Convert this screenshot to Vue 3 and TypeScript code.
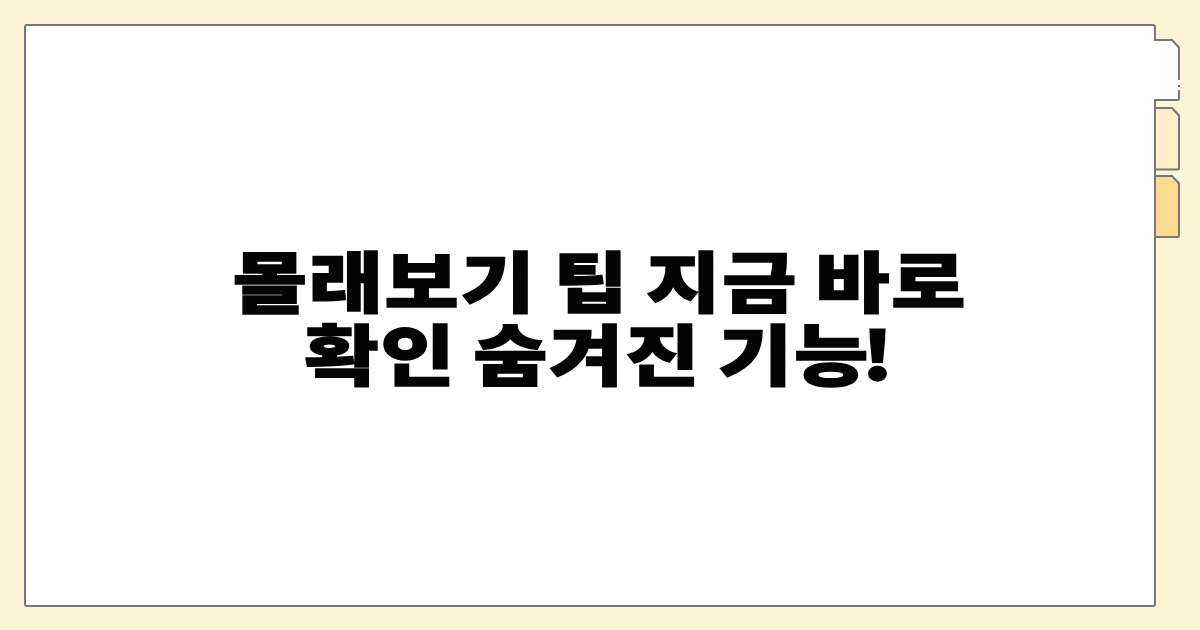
<script setup lang="ts">
interface Tab { h: number; bottom: number; fill: string; cls: string; x0: number }
const tabs: Tab[] = [
  { h: 64, bottom: 61, fill: '#ffffff', cls: 'first', x0: 0 },
  { h: 64, bottom: 62.5, fill: '#fdeec8', cls: 'second', x0: 2 },
  { h: 63, bottom: 62, fill: '#fed990', cls: 'third', x0: 2 },
]
function tabPath(t: Tab): string {
  return `M${t.x0} 1 H18 L25 8.5 V${t.bottom - 1.5} Q25 ${t.bottom} 23.5 ${t.bottom} H${t.x0}`
}
</script>

<template>
  <main class="page">
    <section class="card">
      <h1 class="title">
        <span>몰래보기 팁 지금 바로</span>
        <span>확인 숨겨진 기<span class="tight">능</span>!</span>
      </h1>
    </section>
    <aside class="tabs">
      <svg
        v-for="t in tabs"
        :key="t.cls"
        :class="['tab', t.cls]"
        width="27"
        :height="t.h"
        :viewBox="`0 0 27 ${t.h}`"
      >
        <path :d="tabPath(t)" :fill="t.fill" stroke="#777" stroke-width="2" />
        <path
          v-if="t.cls === 'first'"
          d="M25 41 V46 M25 48 V51"
          fill="none"
          stroke="#fff"
          stroke-width="2.4"
        />
      </svg>
    </aside>
  </main>
</template>

<style>
html, body { margin: 0; background: #fef5d9; }
</style>

<style scoped>
.page {
  width: 1200px;
  height: 630px;
  box-sizing: border-box;
  padding: 24px 19px 23px 24px;
  display: flex;
  background: #fef5d9;
  overflow: hidden;
}
.card {
  width: 1132px;
  height: 583px;
  box-sizing: border-box;
  background: #fff;
  border: 2px solid #777;
  border-radius: 3px;
  display: flex;
  align-items: center;
  justify-content: center;
  flex: none;
}
.title {
  margin: -1px 0 0 20px;
  display: flex;
  flex-direction: column;
  align-items: center;
  font-family: "Noto Sans CJK KR", sans-serif;
  font-weight: 900;
  font-size: 72px;
  line-height: 80px;
  letter-spacing: 1.6px;
  word-spacing: -3px;
  color: #050505;
  -webkit-text-stroke: 1.6px #050505;
  white-space: nowrap;
  transform: scale(1.12, 0.92);
}
.tight { letter-spacing: -6px; }
.tabs {
  display: flex;
  flex-direction: column;
  gap: 4px;
  margin: 15px 0 0 -2px;
}
.tab { display: block; flex: none; }
</style>
